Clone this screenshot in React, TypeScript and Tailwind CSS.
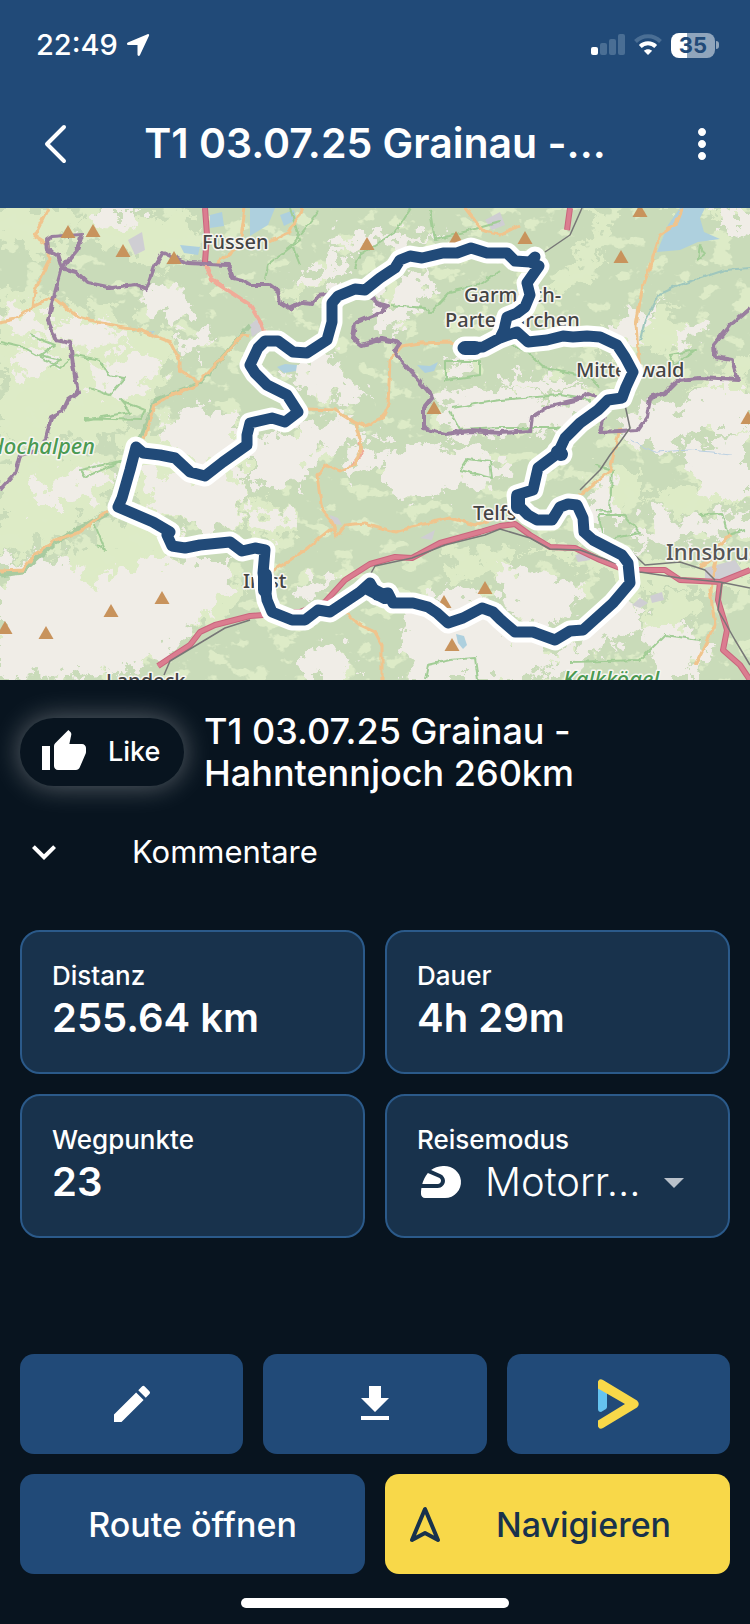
import { useState } from 'react';
import { MdArrowDropDown, MdDownload, MdEdit, MdExpandMore, MdMoreVert, MdSportsMotorsports, MdThumbUp } from 'react-icons/md';

const ROUTE =
    'M463 348L483 347L500 338L504 330L507 317L517 313L525 307L530 295L527 283L539 266L530 262L535 257L530 262L515 261L507 253L487 253L471 248L457 253L443 253L422 258L410 256L400 260L395 268L380 278L365 290L355 289L338 296L332 303L332 322L327 340L307 353L293 352L278 341L265 341L258 348L250 365L255 373L267 385L287 395L298 412L285 422L272 418L250 423L247 435L247 445L223 462L205 476L190 472L175 458L160 455L143 453L136 447L130 470L122 498L118 507L153 522L170 532L167 535L172 546L185 548L200 545L230 542L242 551L255 548L265 550L263 573L267 600L272 612L292 620L305 620L318 610L330 612L360 592L370 583L377 595L388 593L393 603L413 603L428 607L437 613L448 623L463 618L482 608L493 612L500 619L515 632L533 632L555 640L570 631L583 630L613 603L630 583L628 563L622 555L593 540L584 532L583 518L577 505L568 504L560 507L552 520L537 520L528 515L518 505L517 495L533 490L538 468L558 453L565 438L580 423L598 410L608 400L622 398L626 387L633 372L625 357L617 345L600 337L587 336L573 337L563 336L547 340L528 342L517 332L500 338';

const MEADOWS = [
    'M0 208H90L60 240L48 262L0 235Z',
    'M0 290L60 300L130 320L180 345L150 400L110 440L0 445Z',
    'M60 215L120 225L190 210L200 250L165 270L125 250L80 240Z',
    'M0 445L110 455L115 500L60 540L0 560Z',
    'M100 510L165 530L170 560L120 570L95 545Z',
    'M120 430L245 430L245 530L165 525L125 500Z',
    'M250 500L298 510L285 540L255 545Z',
    'M545 285L570 265L605 253L590 275L560 295Z',
    'M590 340L660 310L700 335L670 350L600 355Z',
    'M600 470L640 470L640 500L605 510Z',
    'M640 500L750 470L750 500L690 515Z',
    'M440 560L500 545L520 570L450 585Z',
    'M690 390L750 350L750 390Z',
    'M180 600L240 585L230 620L190 625Z',
    'M60 540L130 560L140 600L80 610Z',
    'M280 290L310 280L318 292L290 300Z',
    'M600 210L620 215L590 255L575 270L590 230Z',
    'M640 600L690 590L700 620L650 640Z',
    'M650 208L750 208L750 218L690 215Z',
    'M520 545L600 570L640 590L750 590L750 560L640 565L560 545Z',
];

const ROCKS = [
    'M12 300L48 318L52 345L20 335L0 320Z',
    'M90 210H140L130 230L95 228Z',
    'M55 322L100 322L130 345L80 350L60 340Z',
    'M150 285L182 288L190 310L175 322L140 305Z',
    'M185 330L215 335L200 360L180 350Z',
    'M20 345L60 352L50 375L10 372Z',
    'M90 370L140 350L165 370L130 395L95 390Z',
    'M160 430L190 400L240 420L240 450L205 465L165 448Z',
    'M140 465L200 480L245 470L243 525L200 530L158 515Z',
    'M30 485L100 465L115 480L70 505L35 505Z',
    'M0 560L50 555L95 580L150 560L235 560L225 600L190 625L170 660L120 672L0 680Z',
    'M325 236L400 232L450 235L395 246L345 250Z',
    'M290 280L325 265L330 248L350 262L345 282L318 290Z',
    'M395 285L432 262L425 300L405 325L385 332L372 318Z',
    'M288 370L330 352L345 380L375 392L355 405L325 400L300 385Z',
    'M250 440L300 428L345 412L360 440L320 455L300 485L250 490Z',
    'M345 455L385 440L395 460L350 475Z',
    'M385 452L430 445L500 455L510 475L480 490L430 492L395 500L385 480Z',
    'M435 398L500 388L540 396L545 425L500 435L450 440Z',
    'M540 400L590 390L600 405L560 425L540 440Z',
    'M445 360L480 362L470 375L440 370Z',
    'M510 370L560 380L590 385L540 395L505 385Z',
    'M615 320L645 310L660 300L640 345L612 340Z',
    'M640 400L680 410L710 385L750 385L750 430L700 430L660 450L620 440Z',
    'M680 330L705 320L700 340L680 345Z',
    'M590 490L612 480L615 520L595 530Z',
    'M680 445L750 430L750 500L720 500L690 470Z',
    'M400 620L430 590L500 600L500 640L540 660L530 680H410Z',
    'M500 565L540 572L585 585L570 620L540 628L515 620Z',
    'M590 620L640 600L640 630L600 650L560 680H540L570 645Z',
    'M640 630L680 620L710 650L690 680H660Z',
    'M300 650L345 645L355 680H310Z',
    'M253 510L290 508L292 525L260 535Z',
    'M295 590L330 572L338 580L310 600Z',
    'M650 510L700 520L750 510L750 535L640 545Z',
    'M480 625L520 640L540 640L560 660L520 680H470Z',
    'M718 208H750V235L725 230Z',
];

const BORDERS = [
    'M53 300L62 268L58 255L48 250L47 240L52 237L82 235L77 250L62 268L76 272L88 283L112 288L135 285L146 290L154 267L163 252L180 260L188 263L228 265L233 278L242 280L250 285L270 285L278 291L280 303L289 309L302 302L313 303L318 296L332 294',
    'M53 300L48 321L56 340L70 343L73 365L78 393L68 400L63 411L51 417L46 438L40 450L20 455L15 473L0 490',
    'M370 295L378 304L387 307L375 315L355 323L353 338L362 345L382 339L400 343L394 352L412 373L433 397L424 408L424 428L445 434L470 431L500 433L530 431L532 417L550 406L575 400L588 394L602 400',
    'M608 402L600 432L638 430L647 417L650 398L665 393L678 380L700 378L738 380L732 360L715 357L714 345L730 325L750 308',
];

const ROADS = [
    'M48 208L34 236L48 245L50 260L35 290L33 307L15 319L0 322',
    'M33 307L52 297L78 317L97 322L140 330L170 342L180 362L180 370L195 380L198 385L170 395L155 405L144 440',
    'M198 382L220 360L242 335L250 336',
    'M306 409L335 410L353 422L365 426L382 418L388 405L390 360L402 346L420 343L450 342L463 346',
    'M108 511L95 520L80 532L55 540L35 555L22 570L0 571',
    'M355 424L362 445L355 465L340 472L325 465L317 475L322 510L332 522L337 537L345 525L365 523L395 532L420 525L450 518L475 525L490 520',
    'M332 528L305 550L272 572',
    'M345 612L360 625L375 632L382 645L382 680',
    'M682 208L675 225L660 235L652 260L642 290L636 325L638 350L640 370',
    'M620 428L610 470L580 495',
    'M730 535L700 568L717 555L710 590L715 625L695 665',
    'M245 208L240 245L215 265',
    'M302 208L290 232L270 242',
    'M465 208L482 230L500 235L520 225',
];

const GREENWAYS = [
    'M0 342L25 348L60 368L75 355L100 360L108 375L125 378L110 395L90 388',
    'M85 420L130 412L120 400L145 410L140 420L85 418',
    'M30 335L55 345L40 355L60 360L50 367',
    'M290 208L300 240L268 265L265 280',
    'M320 210L300 235L292 245L300 265',
    'M410 208L395 232L360 255L355 268',
    'M430 210L435 240L500 222',
    'M390 305L425 308L430 313L450 292L480 285L500 270',
    'M500 340L525 350L545 368L590 378L600 388',
    'M452 408L500 400L560 395L590 400L595 420L560 428L500 428L460 430L450 412',
    'M445 380L480 375L480 362L445 362Z',
    'M460 470L492 478L490 462L467 459Z',
    'M425 680L428 665L450 660L475 658L478 680',
    'M598 515L605 540L640 533L625 515Z',
    'M670 355L695 350L675 365Z',
    'M595 465L612 470L610 512L595 510',
    'M570 662L640 660L665 635L700 640',
    'M80 470L125 460L85 477Z',
    'M95 525L105 550L97 545',
    'M700 245L705 255L698 260Z',
    'M700 515L722 513L728 535L745 530',
];

const MOTORWAYS = [
    'M158 666L170 658L190 645L200 632L215 625L250 616L300 612L325 602L345 580L370 564L395 557L412 558L440 543L480 532L500 526L515 524L530 535L550 547L575 548L600 560L625 570L665 570L680 580L720 582L750 570',
    'M720 582L718 600L727 630L723 650L740 665L750 680',
    'M205 208L207 235L205 262',
    'M570 208L567 230',
];

const RAILS = [
    'M164 675L170 661L205 640L225 628L250 620',
    'M370 575L375 566L412 558L445 545L485 535L500 529L530 538L550 549L580 550L640 572L680 578L720 582L750 588',
    'M625 405L630 428L620 442L610 455L600 470L580 490',
    'M582 208L570 235L545 252',
    'M722 582L718 610L735 640L750 665',
    'M627 548L645 565L680 562L705 570L715 580',
];

const PEAKS = [
    [68, 232], [93, 231], [123, 251], [174, 258], [367, 244], [456, 238], [525, 238], [621, 257],
    [640, 211], [434, 408], [748, 418], [162, 598], [111, 611], [46, 633], [5, 628], [444, 602],
    [485, 588], [452, 645],
];

const TOWNS = [
    { name: 'Füssen', x: 202, y: 249 },
    { name: 'Garmisch-', x: 464, y: 302 },
    { name: 'Partenkirchen', x: 445, y: 327 },
    { name: 'Mittenwald', x: 576, y: 377 },
    { name: 'Telfs', x: 473, y: 520 },
    { name: 'Imst', x: 243, y: 588 },
    { name: 'Landeck', x: 106, y: 688 },
];

function RouteMap() {
    return (
        <svg viewBox="0 208 750 472" className="block w-full bg-[#c9dbb9]" role="img" aria-label="Route">
            <defs>
                {/* ragged outlines for woods and rock */}
                <filter id="ragged" x="-5%" y="-5%" width="110%" height="110%">
                    <feTurbulence type="fractalNoise" baseFrequency="0.07" numOctaves="5" seed="8" />
                    <feDisplacementMap in="SourceGraphic" scale="46" xChannelSelector="R" yChannelSelector="G" />
                </filter>
                <filter id="wobble" x="-5%" y="-5%" width="110%" height="110%">
                    <feTurbulence type="fractalNoise" baseFrequency="0.12" numOctaves="2" seed="3" />
                    <feDisplacementMap in="SourceGraphic" scale="5" xChannelSelector="R" yChannelSelector="G" />
                </filter>
                {/* small scattered clearings */}
                <filter id="clearings" x="0%" y="0%" width="100%" height="100%" colorInterpolationFilters="sRGB">
                    <feTurbulence type="fractalNoise" baseFrequency="0.045 0.06" numOctaves="4" seed="21" />
                    <feColorMatrix values="0 0 0 0 0.867  0 0 0 0 0.922  0 0 0 0 0.780  0 16 0 0 -9.600" />
                </filter>
            </defs>
            <g filter="url(#ragged)">
                <path d={MEADOWS.join('')} fill="#ddebc6" />
            </g>
            <rect x="0" y="208" width="750" height="472" filter="url(#clearings)" />
            <g filter="url(#ragged)">
                <path d={ROCKS.join('')} fill="#f0ede7" />
            </g>
            <g fill="#aed0de">
                <path d="M250 208H275L268 225L250 236Z" />
                <path d="M210 215L222 212L224 226L210 228Z" />
                <path d="M180 245L200 247L198 255L184 253Z" />
                <path d="M280 215L294 210L296 220L284 226Z" />
                <path d="M680 208H705L700 218L704 232L720 239L698 242L680 250L657 252L668 225Z" />
                <path d="M277 367L285 364L297 365L296 371L284 373Z" />
                <path d="M417 365L430 366L438 362L434 371L425 373Z" />
                <path d="M144 332L155 331L150 336Z" />
                <path d="M456 634L464 636L467 645L463 649L458 643Z" />
            </g>
            <g fill="#cfced3">
                <path d="M128 240L142 232L145 250L135 255Z" />
                <path d="M485 220L500 212L505 225L492 230Z" />
                <path d="M250 325L258 318L262 330L252 337Z" />
                <path d="M420 538L435 530L432 540Z" />
                <path d="M632 605L640 598L648 603L640 608Z" />
                <path d="M650 596L662 592L664 600L652 603Z" />
                <path d="M705 568L735 560L745 575L725 582L705 578Z" />
                <path d="M330 515L338 518L342 525L332 524Z" />
                <path d="M575 555L588 552L590 560L578 562Z" />
            </g>
            <g fill="none" strokeLinejoin="round" filter="url(#wobble)">
                <path d={GREENWAYS.join('')} stroke="#a2cd96" strokeWidth="2" />
                <path d="M750 268L725 270L680 285L658 295L645 320L640 340" stroke="#9fc7bd" strokeWidth="2" />
                <path d="M630 440L655 452L690 450L732 454" stroke="#b9cfe2" strokeWidth="1" />
                <path d="M250 325L200 383L155 400L140 440" stroke="#a9cba0" strokeWidth="4" />
                <path d="M108 513L55 542L22 572L0 575" stroke="#a9cba0" strokeWidth="5" />
                <path d="M205 262L212 280L250 305L262 325L268 340" stroke="#f0ab98" strokeWidth="4" />
                <path d="M360 442L362 455L350 467" stroke="#f0ab98" strokeWidth="3" />
                <path d={ROADS.join('')} stroke="#f0c48d" strokeWidth="3" />
                <path d={BORDERS.join('')} stroke="#9a7f9f" strokeWidth="4" />
            </g>
            <g fill="none" strokeLinejoin="round">
                <path d={MOTORWAYS.join('')} stroke="#c9657d" strokeWidth="6" />
                <path d={MOTORWAYS.join('')} stroke="#db7d90" strokeWidth="4" />
                <path d={RAILS.join('')} stroke="#777" strokeWidth="1.5" />
            </g>
            {PEAKS.map(([x, y]) => (
                <path key={`${x}-${y}`} d={`M${x} ${y - 7}l7.500 13h-15z`} fill="#c8935c" />
            ))}
            <g fontFamily="'Noto Sans', sans-serif" fontSize="20" fontWeight="500" stroke="#f7f6f1" strokeWidth="3" strokeLinejoin="round" style={{ paintOrder: 'stroke' }}>
                {TOWNS.map((town) => (
                    <text key={town.name} x={town.x} y={town.y} fill="#444">
                        {town.name}
                    </text>
                ))}
                <text x="666" y="560" fontSize="22" fill="#555">
                    Innsbruck
                </text>
                <text x="95" y="454" fontSize="22" textAnchor="end" fill="#4b9a52" fontStyle="italic">
                    Hochalpen
                </text>
                <text x="563" y="687" fontSize="22" fill="#4b9a52" fontStyle="italic">
                    Kalkkögel
                </text>
            </g>
            <g fill="none" strokeLinecap="round" strokeLinejoin="round">
                <path d={ROUTE} stroke="#fff" strokeWidth="21" />
                <path d="M465 348H475M368 588L385 597M558 452L561 454" stroke="#fff" strokeWidth="23" />
                <path d={ROUTE} stroke="#214a78" strokeWidth="11" />
                <path d="M465 348H475M368 588L385 597M265 575V590M518 497V507M558 452L561 454" stroke="#214a78" strokeWidth="14" />
            </g>
        </svg>
    );
}

function StatusBar() {
    return (
        <div className="flex h-[90px] items-center justify-between pr-[31px] pl-9 text-white">
            <div className="flex items-center gap-2">
                <span className="text-[29px] font-medium">22:49</span>
                <svg width="24" height="24" viewBox="0 0 24 24" fill="currentColor">
                    <path d="M21.500 1.200L1.800 9.500C.4 10.200.8 12 2.300 12H11.500V21.500C11.500 23.100 13.300 23.500 14 22L23 2.800C23.500 1.600 22.700.7 21.500 1.200Z" />
                </svg>
            </div>
            <div className="flex items-center gap-[9px]">
                <svg width="34" height="22" viewBox="0 0 34 22" fill="currentColor">
                    <rect x="0" y="13" width="7" height="8" rx="2" />
                    <g fill="#4a6e94">
                        <rect x="9" y="9" width="7" height="12" rx="2" />
                        <rect x="18" y="5" width="7" height="16" rx="2" />
                        <rect x="27" y="0" width="7" height="21" rx="2" />
                    </g>
                </svg>
                <svg width="28" height="22" viewBox="0 0 28 22" fill="none" strokeWidth="4">
                    <path d="M1.500 7.500C8.500 .4 19.500 .4 26.500 7.500" stroke="#4a6e94" />
                    <path d="M6.300 12.500C10.500 8.300 17.500 8.300 21.700 12.500" stroke="#fff" />
                    <path d="M14 21L9.800 16.800C12 14.600 16 14.600 18.200 16.800Z" fill="#fff" />
                </svg>
                <div className="flex items-center gap-px">
                    <div className="flex h-[25px] w-11 items-center justify-center rounded-lg bg-linear-to-r from-white from-36% to-[#90a5bc] to-36%">
                        <span className="text-[22px] leading-none font-bold text-[#214a78]">35</span>
                    </div>
                    <div className="h-2 w-[3px] rounded-r-full bg-[#90a5bc]" />
                </div>
            </div>
        </div>
    );
}

function InfoCard({ label, value }: { label: string; value: string }) {
    return (
        <div className="rounded-[20px] border-2 border-[#2b5a8a] bg-[#18324c] px-[30px] pt-[26px] pb-[30px]">
            <p className="text-[26px] leading-9 font-medium">{label}</p>
            <p className="text-[40px] leading-[48px] font-semibold">{value}</p>
        </div>
    );
}

function App() {
    const [liked, setLiked] = useState(false);
    const [mode, setMode] = useState('motorcycle');

    return (
        <div className="flex min-h-screen flex-col bg-[#08141f] font-['Inter',sans-serif] text-white">
            <header className="bg-[#214a78] pb-[10px]">
                <StatusBar />
                <div className="flex h-[108px] items-center px-6">
                    <button type="button" aria-label="Zurück" className="size-12">
                        <svg width="48" height="48" viewBox="0 0 48 48" fill="none" stroke="currentColor" strokeWidth="4" strokeLinecap="round" strokeLinejoin="round">
                            <path d="M40 7L23 24L40 41" />
                        </svg>
                    </button>
                    <h1 className="flex-1 text-center text-[41px] font-semibold whitespace-nowrap">T1 03.07.25 Grainau -...</h1>
                    <button type="button" aria-label="Mehr">
                        <MdMoreVert size={48} />
                    </button>
                </div>
            </header>

            <RouteMap />

            <main className="flex flex-1 flex-col px-5 pt-[30px]">
                <div className="flex items-center gap-5">
                    <button
                        type="button"
                        aria-pressed={liked}
                        onClick={() => setLiked(!liked)}
                        className="flex h-[68px] w-[164px] shrink-0 items-center gap-5 rounded-full bg-[#08141f] pl-5 text-[27px] font-medium shadow-[0_0_28px_rgba(255,255,255,0.35)]"
                    >
                        <MdThumbUp size={48} />
                        Like
                    </button>
                    <h2 className="text-[36px] leading-[42px] font-medium">
                        T1 03.07.25 Grainau -<br />
                        Hahntennjoch 260km
                    </h2>
                </div>

                <button type="button" className="mt-[18px] flex h-20 items-center gap-16 text-left text-[31px]">
                    <MdExpandMore size={48} />
                    Kommentare
                </button>

                <div className="mt-[38px] grid grid-cols-2 gap-5">
                    <InfoCard label="Distanz" value="255.64 km" />
                    <InfoCard label="Dauer" value="4h 29m" />
                    <InfoCard label="Wegpunkte" value="23" />
                    <div className="rounded-[20px] border-2 border-[#2b5a8a] bg-[#18324c] px-[30px] pt-[26px] pb-[30px]">
                        <label htmlFor="mode" className="block text-[26px] leading-9 font-medium">Reisemodus</label>
                        <div className="flex items-center">
                            <MdSportsMotorsports size={48} className="mr-5 shrink-0" />
                            <select
                                id="mode"
                                value={mode}
                                onChange={(e) => setMode(e.target.value)}
                                className="h-12 min-w-0 flex-1 appearance-none bg-transparent text-[40px] leading-[48px] font-light"
                            >
                                <option value="motorcycle">Motorr...</option>
                            </select>
                            <MdArrowDropDown size={48} className="pointer-events-none shrink-0 text-[#b9c1ca]" />
                        </div>
                    </div>
                </div>

                <div className="mt-auto flex flex-col gap-5 pt-10">
                    <div className="grid grid-cols-3 gap-5">
                        <button type="button" aria-label="Bearbeiten" className="flex h-[100px] items-center justify-center rounded-[14px] bg-[#214a78]">
                            <MdEdit size={48} />
                        </button>
                        <button type="button" aria-label="Herunterladen" className="flex h-[100px] items-center justify-center rounded-[14px] bg-[#214a78]">
                            <MdDownload size={48} />
                        </button>
                        <button type="button" aria-label="Abspielen" className="flex h-[100px] items-center justify-center rounded-[14px] bg-[#214a78]">
                            <svg width="42" height="50" viewBox="-1 0 42 50">
                                <path d="M0 8L9 13V28Q9 29 8 30L3 33Q0 33 0 30Z" fill="#65c3f0" />
                                <path d="M0 2.500Q1.500 -1 5 1L39 21.500Q42.500 25 39 28.500L5 49Q1.500 51 0 47.500V41.500L27 25L0 9.500Z" fill="#f8d849" />
                            </svg>
                        </button>
                    </div>
                    <div className="grid grid-cols-2 gap-5 text-[34px] font-medium">
                        <button type="button" className="h-[100px] rounded-[14px] bg-[#214a78]">Route öffnen</button>
                        <button type="button" className="flex h-[100px] items-center rounded-[14px] bg-[#f8d849] px-6 text-[#18324c]">
                            <svg width="32" height="38" viewBox="0 0 32 38" fill="none" stroke="currentColor" strokeWidth="4" strokeLinejoin="round">
                                <path d="M16 4L3 35L16 28L29 35Z" />
                            </svg>
                            <span className="flex-1 pl-5 text-center">Navigieren</span>
                        </button>
                    </div>
                </div>
            </main>

            <div className="flex justify-center pt-6 pb-4">
                <div className="h-[10px] w-[268px] rounded-full bg-white" />
            </div>
        </div>
    );
}

export default App;
